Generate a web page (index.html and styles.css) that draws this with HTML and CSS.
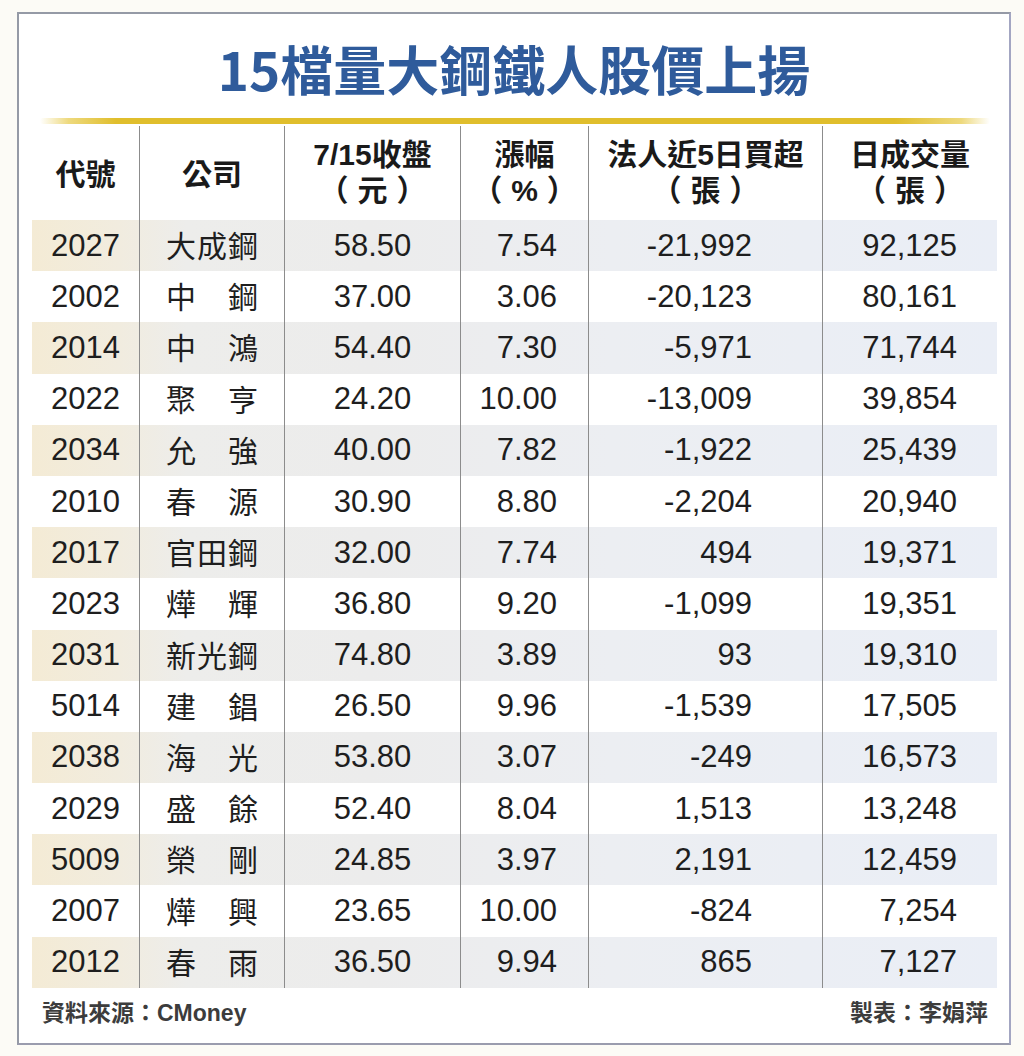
FILE: index.html
```html
<!DOCTYPE html>
<html lang="zh-Hant">
<head>
<meta charset="utf-8">
<title>15檔量大鋼鐵人股價上揚</title>
<link rel="stylesheet" href="styles.css">
</head>
<body>
<div class="frame">
  <h1 class="title">15檔量大鋼鐵人股價上揚</h1>
  <div class="gold"></div>
  <div class="table">
    <div class="row head">
      <div class="c c1">代號</div>
      <div class="c c2">公司</div>
      <div class="c c3"><span>7/15收盤</span><span class="unit">（元）</span></div>
      <div class="c c4"><span>漲幅</span><span class="unit">（%）</span></div>
      <div class="c c5"><span>法人近5日買超</span><span class="unit">（張）</span></div>
      <div class="c c6"><span>日成交量</span><span class="unit">（張）</span></div>
    </div>
    <div class="row alt"><div class="c c1">2027</div><div class="c c2"><span class="nm"><i>大</i><i>成</i><i>鋼</i></span></div><div class="c c3">58.50</div><div class="c c4">7.54</div><div class="c c5">-21,992</div><div class="c c6">92,125</div></div>
    <div class="row"><div class="c c1">2002</div><div class="c c2"><span class="nm"><i>中</i><i>鋼</i></span></div><div class="c c3">37.00</div><div class="c c4">3.06</div><div class="c c5">-20,123</div><div class="c c6">80,161</div></div>
    <div class="row alt"><div class="c c1">2014</div><div class="c c2"><span class="nm"><i>中</i><i>鴻</i></span></div><div class="c c3">54.40</div><div class="c c4">7.30</div><div class="c c5">-5,971</div><div class="c c6">71,744</div></div>
    <div class="row"><div class="c c1">2022</div><div class="c c2"><span class="nm"><i>聚</i><i>亨</i></span></div><div class="c c3">24.20</div><div class="c c4">10.00</div><div class="c c5">-13,009</div><div class="c c6">39,854</div></div>
    <div class="row alt"><div class="c c1">2034</div><div class="c c2"><span class="nm"><i>允</i><i>強</i></span></div><div class="c c3">40.00</div><div class="c c4">7.82</div><div class="c c5">-1,922</div><div class="c c6">25,439</div></div>
    <div class="row"><div class="c c1">2010</div><div class="c c2"><span class="nm"><i>春</i><i>源</i></span></div><div class="c c3">30.90</div><div class="c c4">8.80</div><div class="c c5">-2,204</div><div class="c c6">20,940</div></div>
    <div class="row alt"><div class="c c1">2017</div><div class="c c2"><span class="nm"><i>官</i><i>田</i><i>鋼</i></span></div><div class="c c3">32.00</div><div class="c c4">7.74</div><div class="c c5">494</div><div class="c c6">19,371</div></div>
    <div class="row"><div class="c c1">2023</div><div class="c c2"><span class="nm"><i>燁</i><i>輝</i></span></div><div class="c c3">36.80</div><div class="c c4">9.20</div><div class="c c5">-1,099</div><div class="c c6">19,351</div></div>
    <div class="row alt"><div class="c c1">2031</div><div class="c c2"><span class="nm"><i>新</i><i>光</i><i>鋼</i></span></div><div class="c c3">74.80</div><div class="c c4">3.89</div><div class="c c5">93</div><div class="c c6">19,310</div></div>
    <div class="row"><div class="c c1">5014</div><div class="c c2"><span class="nm"><i>建</i><i>錩</i></span></div><div class="c c3">26.50</div><div class="c c4">9.96</div><div class="c c5">-1,539</div><div class="c c6">17,505</div></div>
    <div class="row alt"><div class="c c1">2038</div><div class="c c2"><span class="nm"><i>海</i><i>光</i></span></div><div class="c c3">53.80</div><div class="c c4">3.07</div><div class="c c5">-249</div><div class="c c6">16,573</div></div>
    <div class="row"><div class="c c1">2029</div><div class="c c2"><span class="nm"><i>盛</i><i>餘</i></span></div><div class="c c3">52.40</div><div class="c c4">8.04</div><div class="c c5">1,513</div><div class="c c6">13,248</div></div>
    <div class="row alt"><div class="c c1">5009</div><div class="c c2"><span class="nm"><i>榮</i><i>剛</i></span></div><div class="c c3">24.85</div><div class="c c4">3.97</div><div class="c c5">2,191</div><div class="c c6">12,459</div></div>
    <div class="row"><div class="c c1">2007</div><div class="c c2"><span class="nm"><i>燁</i><i>興</i></span></div><div class="c c3">23.65</div><div class="c c4">10.00</div><div class="c c5">-824</div><div class="c c6">7,254</div></div>
    <div class="row alt"><div class="c c1">2012</div><div class="c c2"><span class="nm"><i>春</i><i>雨</i></span></div><div class="c c3">36.50</div><div class="c c4">9.94</div><div class="c c5">865</div><div class="c c6">7,127</div></div>
  </div>
  <div class="foot">
    <span>資料來源：CMoney</span>
    <span>製表：李娟萍</span>
  </div>
</div>
</body>
</html>
```

FILE: styles.css
```css
html, body {
  margin: 0;
  padding: 0;
}
body {
  background: #fcfbf6;
  width: 1024px;
  height: 1056px;
  overflow: hidden;
  font-family: "Liberation Sans", "Noto Sans CJK TC", sans-serif;
  color: #1e1e1e;
  text-spacing-trim: space-all;
}
.frame {
  box-sizing: border-box;
  margin: 12px 0 0 17px;
  width: 994px;
  height: 1033px;
  border: 2px solid #959aa6;
  border-right-color: #a3a6c2;
  border-bottom-color: #9a9cae;
  background: #fff;
  display: flex;
  flex-direction: column;
}
.title {
  margin: 24px 0 0 0;
  height: 60px;
  line-height: 60px;
  text-align: center;
  font-family: "Noto Sans CJK TC", sans-serif;
  font-weight: 700;
  font-size: 53px;
  color: #2f5b9b;
}
.gold {
  margin: 20px 19px 0 21px;
  height: 6px;
  border-radius: 3px;
  background: linear-gradient(to right, rgba(226,192,40,0) 0, rgba(226,192,40,0.6) 3%, #e0be2c 8%, #e0be2c 90%, rgba(226,192,40,0.6) 97%, rgba(226,192,40,0) 100%);
}
.table {
  margin: 2px 12px 0 13px;
  display: flex;
  flex-direction: column;
}
.row {
  display: grid;
  grid-template-columns: 107px 145px 176px 128px 234px 175px;
  height: 51.2px;
  font-size: 31px;
}
.row.alt {
  background: linear-gradient(to right, #f4ebd5 0, #f1ecdf 9%, #ededeb 16%, #ececec 35%, #eceef2 60%, #eaeef6 100%);
}
.row.head {
  height: 94px;
  font-family: "Liberation Sans", "Noto Sans CJK TC", sans-serif;
  font-weight: 700;
  font-size: 30px;
  color: #1a1a1a;
}
.c {
  display: flex;
  align-items: center;
  justify-content: center;
  border-left: 1px solid #8c8c8c;
  white-space: nowrap;
}
.c1 {
  border-left: none;
}
.head .c {
  flex-direction: column;
  line-height: 36px;
}
.head .c1,
.head .c2 {
  padding-top: 4px;
}
.head .unit {
  letter-spacing: 9px;
  padding-left: 9px;
}
.row:not(.head) .c4 {
  justify-content: flex-end;
  padding-right: 31px;
}
.row:not(.head) .c5 {
  justify-content: flex-end;
  padding-right: 70px;
}
.row:not(.head) .c6 {
  justify-content: flex-end;
  padding-right: 40px;
}
.nm {
  display: flex;
  justify-content: space-between;
  width: 92px;
  font-family: "Noto Sans CJK TC", sans-serif;
  font-size: 30px;
  line-height: 40px;
  margin-top: -3px;
}
.nm i {
  font-style: normal;
}
.foot {
  display: flex;
  justify-content: space-between;
  align-items: center;
  height: 46px;
  padding: 0 21px 0 23px;
  font-family: "Liberation Sans", "Noto Sans CJK TC", sans-serif;
  font-size: 23px;
  font-weight: 700;
  color: #3c3c3c;
}
```
